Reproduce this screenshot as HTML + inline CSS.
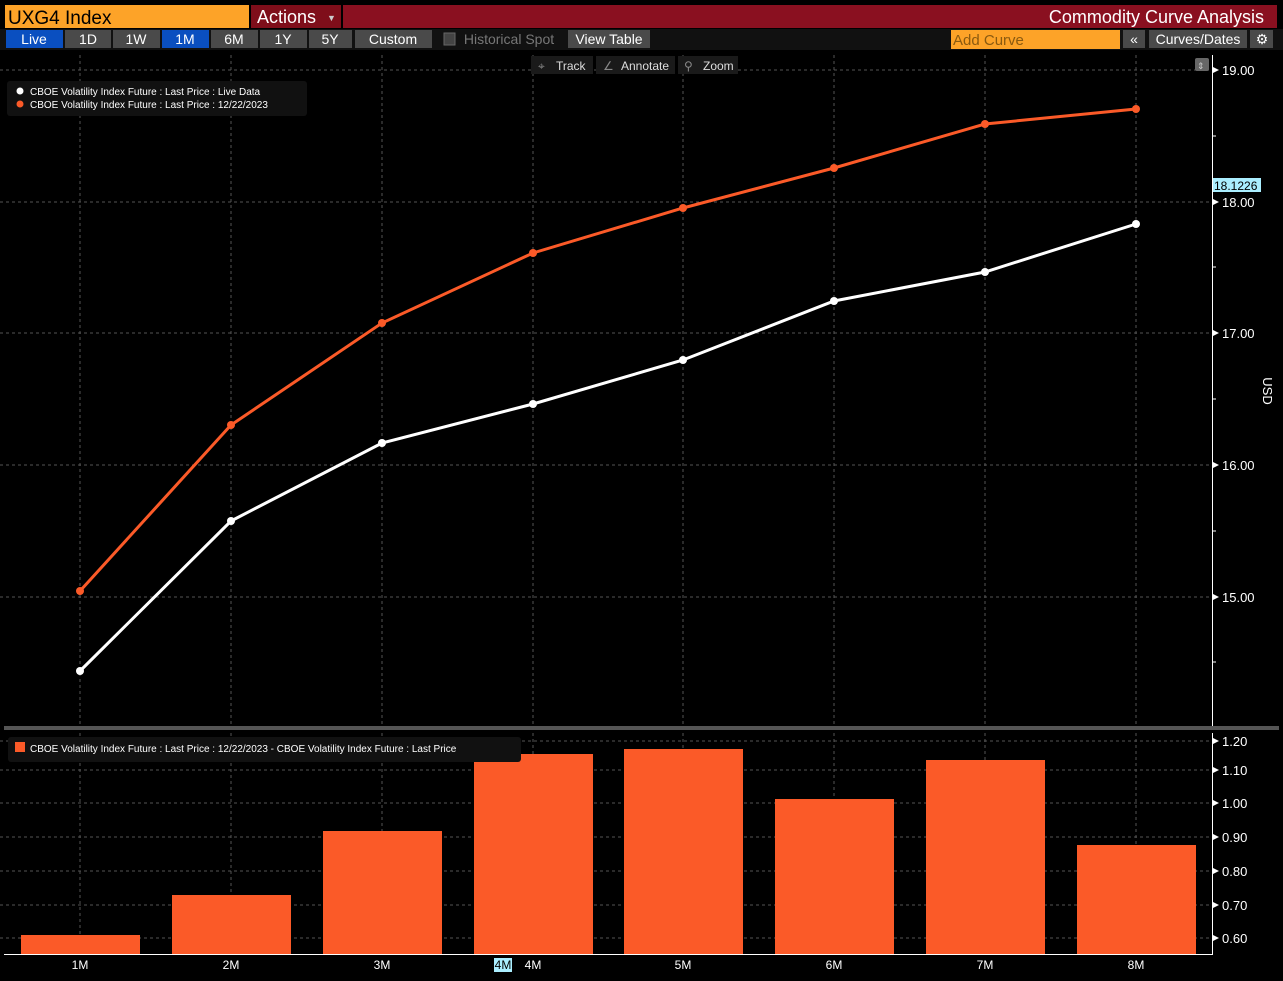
<!DOCTYPE html>
<html><head><meta charset="utf-8"><style>
body{margin:0;background:#000;width:1283px;height:981px;overflow:hidden;font-family:"Liberation Sans",sans-serif}
svg{display:block}
text{font-family:"Liberation Sans",sans-serif}
</style></head><body>
<svg width="1283" height="981" xmlns="http://www.w3.org/2000/svg">
<rect width="1283" height="981" fill="#000"/>
<!-- top bar -->
<rect x="5" y="5" width="244" height="23" fill="#fda328"/>
<text x="8" y="24" font-size="19" fill="#000">UXG4 Index</text>
<rect x="251" y="5" width="90" height="23" fill="#7f0e1a"/>
<text x="257" y="23" font-size="18" fill="#fff">Actions</text>
<text x="327" y="21" font-size="9" fill="#ccc">▼</text>
<rect x="343" y="5" width="934" height="23" fill="#8a1020"/>
<text x="1264" y="23" font-size="18" fill="#fff" text-anchor="end">Commodity Curve Analysis</text>
<!-- second row -->
<rect x="0" y="29" width="1283" height="21" fill="#111"/>
<g font-size="14" text-anchor="middle" fill="#fff">
<rect x="6" y="30" width="57" height="18" fill="#0a4fc0"/><text x="34" y="44">Live</text>
<rect x="65" y="30" width="46" height="18" fill="#4a4a4a"/><text x="88" y="44">1D</text>
<rect x="113" y="30" width="47" height="18" fill="#4a4a4a"/><text x="136" y="44">1W</text>
<rect x="162" y="30" width="47" height="18" fill="#0a4fc0"/><text x="185" y="44">1M</text>
<rect x="211" y="30" width="47" height="18" fill="#4a4a4a"/><text x="234" y="44">6M</text>
<rect x="260" y="30" width="47" height="18" fill="#4a4a4a"/><text x="283" y="44">1Y</text>
<rect x="309" y="30" width="43" height="18" fill="#4a4a4a"/><text x="330" y="44">5Y</text>
<rect x="355" y="30" width="77" height="18" fill="#4a4a4a"/><text x="393" y="44">Custom</text>
<rect x="444" y="33" width="11" height="12" fill="#444" stroke="#666"/>
<text x="509" y="44" fill="#777">Historical Spot</text>
<rect x="568" y="30" width="82" height="18" fill="#4a4a4a"/><text x="609" y="44">View Table</text>
<rect x="951" y="30" width="169" height="19" fill="#fda328"/>
<text x="953" y="45" fill="#8a5a10" text-anchor="start" font-size="15">Add Curve</text>
<rect x="1123" y="30" width="22" height="18" fill="#4a4a4a"/><text x="1134" y="44">«</text>
<rect x="1149" y="30" width="98" height="18" fill="#4a4a4a"/><text x="1198" y="44">Curves/Dates</text>
<rect x="1250" y="30" width="23" height="18" fill="#4a4a4a"/><text x="1262" y="44">⚙</text>
</g>
<!-- grid main -->
<g stroke="#555" stroke-dasharray="3,3" stroke-width="1">
<line x1="0" y1="70" x2="1212" y2="70"/><line x1="0" y1="202" x2="1212" y2="202"/><line x1="0" y1="333" x2="1212" y2="333"/><line x1="0" y1="465" x2="1212" y2="465"/><line x1="0" y1="597" x2="1212" y2="597"/>
<line x1="80" y1="55" x2="80" y2="954"/><line x1="231" y1="55" x2="231" y2="954"/><line x1="382" y1="55" x2="382" y2="954"/><line x1="533" y1="55" x2="533" y2="954"/><line x1="683" y1="55" x2="683" y2="954"/><line x1="834" y1="55" x2="834" y2="954"/><line x1="985" y1="55" x2="985" y2="954"/><line x1="1136" y1="55" x2="1136" y2="954"/>
<line x1="0" y1="741" x2="1212" y2="741"/><line x1="0" y1="770" x2="1212" y2="770"/><line x1="0" y1="803" x2="1212" y2="803"/><line x1="0" y1="837" x2="1212" y2="837"/><line x1="0" y1="871" x2="1212" y2="871"/><line x1="0" y1="905" x2="1212" y2="905"/><line x1="0" y1="938" x2="1212" y2="938"/>
</g>
<!-- toolbar -->
<rect x="531" y="56" width="62" height="18" fill="#1a1a1a"/><rect x="596" y="56" width="79" height="18" fill="#1a1a1a"/><rect x="678" y="56" width="60" height="18" fill="#1a1a1a"/>
<g font-size="12" fill="#ddd"><text x="538" y="70" fill="#888">⌖</text><text x="556" y="70">Track</text><text x="603" y="70" fill="#888">∠</text><text x="621" y="70">Annotate</text><text x="684" y="70" fill="#888">⚲</text><text x="703" y="70">Zoom</text></g>
<!-- legend -->
<rect x="7" y="81" width="300" height="35" rx="3" fill="#111"/>
<circle cx="20" cy="91" r="3.5" fill="#fff"/><circle cx="20" cy="104" r="3.5" fill="#fb5a28"/>
<g font-size="10" fill="#fff"><text x="30" y="95">CBOE Volatility Index Future : Last Price : Live Data</text><text x="30" y="108">CBOE Volatility Index Future : Last Price : 12/22/2023</text></g>
<!-- axis main -->
<line x1="1212.5" y1="55" x2="1212.5" y2="727" stroke="#fff"/>
<g fill="#fff"><polygon points="1213,67 1219,70 1213,73"/><polygon points="1213,199 1219,202 1213,205"/><polygon points="1213,330 1219,333 1213,336"/><polygon points="1213,462 1219,465 1213,468"/><polygon points="1213,594 1219,597 1213,600"/></g>
<g stroke="#fff"><line x1="1212" y1="267" x2="1216" y2="267"/><line x1="1212" y1="399" x2="1216" y2="399"/><line x1="1212" y1="531" x2="1216" y2="531"/><line x1="1212" y1="662" x2="1216" y2="662"/><line x1="1212" y1="136" x2="1216" y2="136"/></g>
<g font-size="13" fill="#fff"><text x="1222" y="75">19.00</text><text x="1222" y="207">18.00</text><text x="1222" y="338">17.00</text><text x="1222" y="470">16.00</text><text x="1222" y="602">15.00</text></g>
<rect x="1213" y="178" width="48" height="14" fill="#aef"/><text x="1214" y="190" font-size="12" fill="#000">18.1226</text>
<text transform="translate(1263,391) rotate(90)" font-size="13" fill="#fff" text-anchor="middle">USD</text>
<rect x="1195" y="58" width="14" height="13" rx="2" fill="#666"/><text x="1197" y="69" font-size="9" fill="#ccc">⇕</text>
<!-- lines -->
<polyline fill="none" stroke="#fb5a28" stroke-width="3" points="80,591 231,425 382,323 533,253 683,208 834,168 985,124 1136,109"/>
<polyline fill="none" stroke="#fff" stroke-width="3" points="80,671 231,521 382,443 533,404 683,360 834,301 985,272 1136,224"/>
<g fill="#fb5a28"><circle cx="80" cy="591" r="4"/><circle cx="231" cy="425" r="4"/><circle cx="382" cy="323" r="4"/><circle cx="533" cy="253" r="4"/><circle cx="683" cy="208" r="4"/><circle cx="834" cy="168" r="4"/><circle cx="985" cy="124" r="4"/><circle cx="1136" cy="109" r="4"/></g>
<g fill="#fff"><circle cx="80" cy="671" r="4"/><circle cx="231" cy="521" r="4"/><circle cx="382" cy="443" r="4"/><circle cx="533" cy="404" r="4"/><circle cx="683" cy="360" r="4"/><circle cx="834" cy="301" r="4"/><circle cx="985" cy="272" r="4"/><circle cx="1136" cy="224" r="4"/></g>
<!-- separator -->
<rect x="4" y="726" width="1275" height="4" fill="#555"/>
<!-- bars -->
<g fill="#fb5a28">
<rect x="21" y="935" width="119" height="19"/><rect x="172" y="895" width="119" height="59"/><rect x="323" y="831" width="119" height="123"/><rect x="474" y="754" width="119" height="200"/><rect x="624" y="749" width="119" height="205"/><rect x="775" y="799" width="119" height="155"/><rect x="926" y="760" width="119" height="194"/><rect x="1077" y="845" width="119" height="109"/>
</g>
<rect x="8" y="737" width="513" height="25" rx="3" fill="#111"/>
<rect x="15" y="742" width="10" height="10" fill="#fb5a28"/>
<text x="30" y="752" font-size="10" fill="#fff">CBOE Volatility Index Future : Last Price : 12/22/2023 - CBOE Volatility Index Future : Last Price</text>
<line x1="1212.5" y1="733" x2="1212.5" y2="954" stroke="#fff"/>
<line x1="4" y1="954.5" x2="1213" y2="954.5" stroke="#fff"/>
<g fill="#fff"><polygon points="1213,738 1219,741 1213,744"/><polygon points="1213,767 1219,770 1213,773"/><polygon points="1213,800 1219,803 1213,806"/><polygon points="1213,834 1219,837 1213,840"/><polygon points="1213,868 1219,871 1213,874"/><polygon points="1213,902 1219,905 1213,908"/><polygon points="1213,935 1219,938 1213,941"/></g>
<g font-size="13" fill="#fff"><text x="1222" y="746">1.20</text><text x="1222" y="775">1.10</text><text x="1222" y="808">1.00</text><text x="1222" y="842">0.90</text><text x="1222" y="876">0.80</text><text x="1222" y="910">0.70</text><text x="1222" y="943">0.60</text></g>
<g font-size="12" fill="#fff" text-anchor="middle"><text x="80" y="969">1M</text><text x="231" y="969">2M</text><text x="382" y="969">3M</text><text x="533" y="969">4M</text><text x="683" y="969">5M</text><text x="834" y="969">6M</text><text x="985" y="969">7M</text><text x="1136" y="969">8M</text></g>
<rect x="494" y="958" width="18" height="14" fill="#aef"/><text x="503" y="969" font-size="12" fill="#000" text-anchor="middle">4M</text>
</svg>
</body></html>
